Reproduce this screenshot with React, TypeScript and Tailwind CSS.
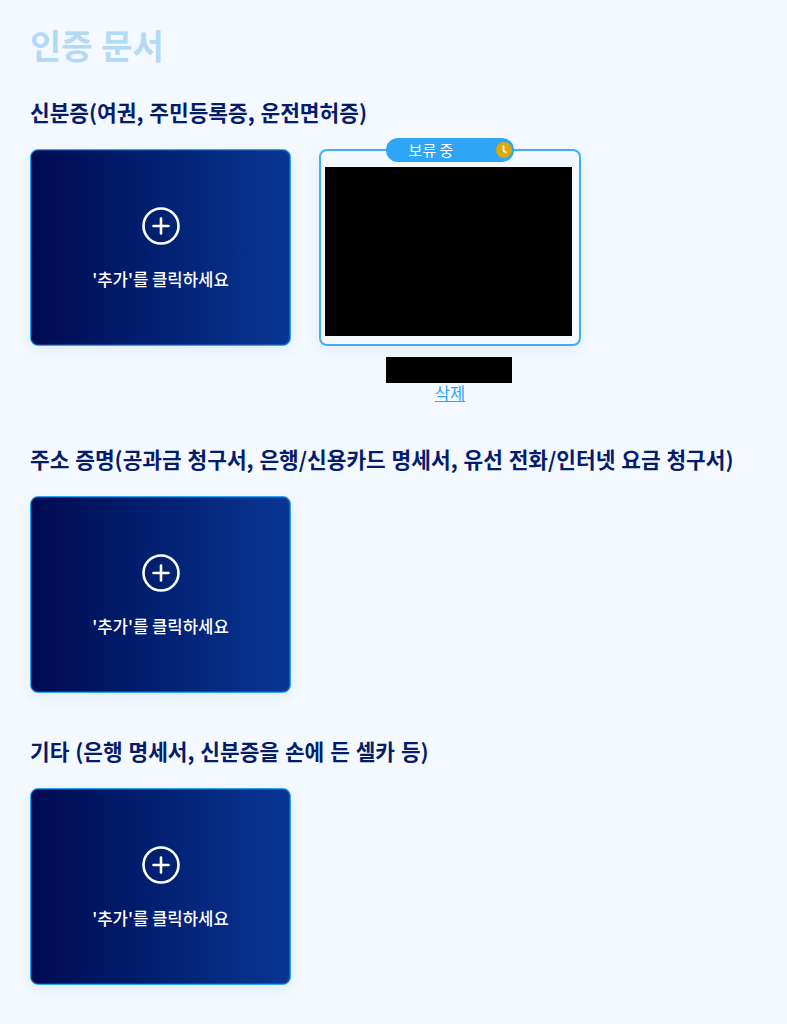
function AddCard() {
  return (
    <button className="w-[261px] h-[197px] rounded-lg border border-[#2ea6f5] bg-gradient-to-r from-[#000a52] to-[#0a3694] shadow-[0_4px_14px_rgba(30,80,140,0.08),inset_0_0_0_1px_rgba(46,166,245,0.3)] flex flex-col items-center text-white">
      <svg width="38" height="38" viewBox="0 0 38 38" fill="none" stroke="white" className="mt-[57px]">
        <circle cx="19" cy="19" r="17.5" strokeWidth="2.6" />
        <path d="M19 11.5v15M11.5 19h15" strokeWidth="2.6" strokeLinecap="round" />
      </svg>
      <span className="mt-[24px] text-[16.7px] leading-5 font-medium">'추가'를 클릭하세요</span>
    </button>
  );
}

function PendingCard() {
  return (
    <div className="flex flex-col items-center w-[262px]">
      <div className="relative w-[262px] h-[197px] rounded-lg border-2 border-[#45acf2] bg-[#f3f9ff] shadow-[0_4px_14px_rgba(30,80,140,0.08)] pl-[4px] pt-[16px]">
        <div className="absolute -top-[13px] left-[65px] w-[128px] h-[24px] rounded-full bg-[#2ea6f5] flex items-center text-white text-[15px]">
          <span className="w-[90px] text-center">보류 중</span>
          <span className="absolute right-[2px] top-[4px] w-[16px] h-[16px] rounded-full bg-[#d9a90f] flex items-center justify-center">
            <svg width="16" height="16" viewBox="0 0 16 16" fill="none" stroke="white" strokeWidth="1.8" strokeLinecap="round" strokeLinejoin="round">
              <path d="M7.5 4.5v4.2l2.3 1.5" />
            </svg>
          </span>
        </div>
        <div className="w-[247px] h-[169px] bg-black" />
      </div>
      <div className="mt-[11px] w-[126px] h-[26px] bg-black -translate-x-[1px]" />
      <a href="#" className="text-[#2ea6f5] underline text-[16.5px] leading-[20px]">
        삭제
      </a>
    </div>
  );
}

function Section({ title, children, className }: { title: string; children: React.ReactNode; className?: string }) {
  return (
    <section className={className}>
      <h3 className="text-[21.4px] leading-[28px] font-bold text-[#051c6b] [word-spacing:1px]">{title}</h3>
      <div className="mt-[23px] flex gap-[28px]">{children}</div>
    </section>
  );
}

export default function App() {
  return (
    <div className="min-h-[1024px] bg-[#f3f9ff] pl-[30px] pt-[23px] font-['Noto_Sans_CJK_KR','Noto_Sans',sans-serif]">
      <h2 className="text-[34px] leading-[44px] font-bold text-[#b4d9f5] [word-spacing:1px]">인증 문서</h2>
      <Section title="신분증(여권, 주민등록증, 운전면허증)" className="mt-[31px]">
        <AddCard />
        <PendingCard />
      </Section>
      <Section title="주소 증명(공과금 청구서, 은행/신용카드 명세서, 유선 전화/인터넷 요금 청구서)" className="mt-[42px]">
        <AddCard />
      </Section>
      <Section title="기타 (은행 명세서, 신분증을 손에 든 셀카 등)" className="mt-[44px]">
        <AddCard />
      </Section>
    </div>
  );
}
